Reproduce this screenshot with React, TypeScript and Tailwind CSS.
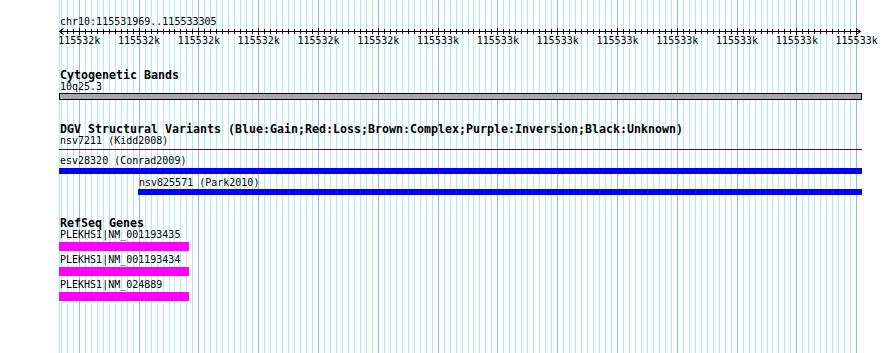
const ORIGIN = 79.3;
const STEP = 5.98;

// minor grid / tick positions, every 10th is a major one
const steps = Array.from({ length: 134 }, (_, i) => i - 3);
const px = (j: number) => Math.floor(ORIGIN + STEP * j) + 0.5;

const labels = [
    ...new Array(6).fill("115532k"),
    ...new Array(8).fill("115533k"),
];

const Grid = () => (
    <svg
        className="absolute inset-0 pointer-events-none"
        width={890}
        height={353}
        shapeRendering="crispEdges"
    >
        <line x1={59.5} x2={59.5} y1={0} y2={353} stroke="#afeeee" />
        {steps.map((j) => (
            <line
                key={j}
                x1={px(j)}
                x2={px(j)}
                y1={0}
                y2={353}
                stroke={j % 10 === 0 ? "#87c1e6" : "#afeeee"}
            />
        ))}
    </svg>
);

const Ruler = () => (
    <svg
        className="block overflow-visible"
        width={890}
        height={6}
        shapeRendering="crispEdges"
    >
        <line x1={59} x2={861} y1={3.5} y2={3.5} stroke="#000" />
        <path d="M59.5 3.5 L63.5 0.5 M59.5 3.5 L63.5 6.5" stroke="#000" fill="none" shapeRendering="auto" />
        <path d="M860.5 3.5 L856.5 0.5 M860.5 3.5 L856.5 6.5" stroke="#000" fill="none" shapeRendering="auto" />
        {steps.map((j) => (
            <line
                key={j}
                x1={px(j)}
                x2={px(j)}
                y1={j % 10 === 0 ? 0 : 1}
                y2={j % 10 === 0 ? 7 : 6}
                stroke="#000"
            />
        ))}
    </svg>
);

const Title = ({ children }: { children: string }) => (
    <div className="ml-[60px] font-bold text-[11.63px] leading-[12px] whitespace-nowrap">
        {children}
    </div>
);

const Label = ({ children, className = "" }: { children: string; className?: string }) => (
    <div className={`text-[10px] leading-[12px] whitespace-nowrap ${className}`}>{children}</div>
);

const genes = ["PLEKHS1|NM_001193435", "PLEKHS1|NM_001193434", "PLEKHS1|NM_024889"];

export default function App() {
    return (
        <div className="relative w-[890px] h-[353px] bg-white overflow-hidden text-black font-['DejaVu_Sans_Mono',monospace]">
            <Grid />
            <div className="relative">
                {/* ruler */}
                <Label className="pt-[16px] ml-[60px]">chr10:115531969..115533305</Label>
                <Ruler />
                <div className="flex mt-[1px] ml-[49.4px]">
                    {labels.map((l, i) => (
                        <div key={i} className="w-[59.8px] shrink-0 text-center text-[10px] leading-[12px]">
                            {l}
                        </div>
                    ))}
                </div>

                {/* cytogenetic bands */}
                <div className="mt-[22px]">
                    <Title>Cytogenetic Bands</Title>
                    <Label className="ml-[60px]">10q25.3</Label>
                    <div className="ml-[59px] w-[803px] h-[7px] border border-black bg-[#a9a9a9]" />
                </div>

                {/* DGV */}
                <div className="mt-[23px]">
                    <Title>
                        DGV Structural Variants (Blue:Gain;Red:Loss;Brown:Complex;Purple:Inversion;Black:Unknown)
                    </Title>
                    <Label className="ml-[60px]">nsv7211 (Kidd2008)</Label>
                    <div className="ml-[59px] mt-[2px] w-[803px] h-[1px] bg-[#4b0082]" />
                    <Label className="ml-[60px] mt-[5px]">esv28320 (Conrad2009)</Label>
                    <div className="ml-[59px] mt-[1px] w-[803px] h-[6px] bg-[#0000ff]" />
                    <Label className="ml-[139px] mt-[3px]">nsv825571 (Park2010)</Label>
                    <div className="ml-[138px] w-[724px] h-[6px] bg-[#0000ff]" />
                </div>

                {/* RefSeq */}
                <div className="mt-[22px]">
                    <Title>RefSeq Genes</Title>
                    {genes.map((g, i) => (
                        <div key={g} className={i === 0 ? "" : "mt-[3px]"}>
                            <Label className="ml-[60px]">{g}</Label>
                            <div className="ml-[59px] mt-[1px] w-[130px] h-[9px] bg-[#ff00ff]" />
                        </div>
                    ))}
                </div>
            </div>
        </div>
    );
}
